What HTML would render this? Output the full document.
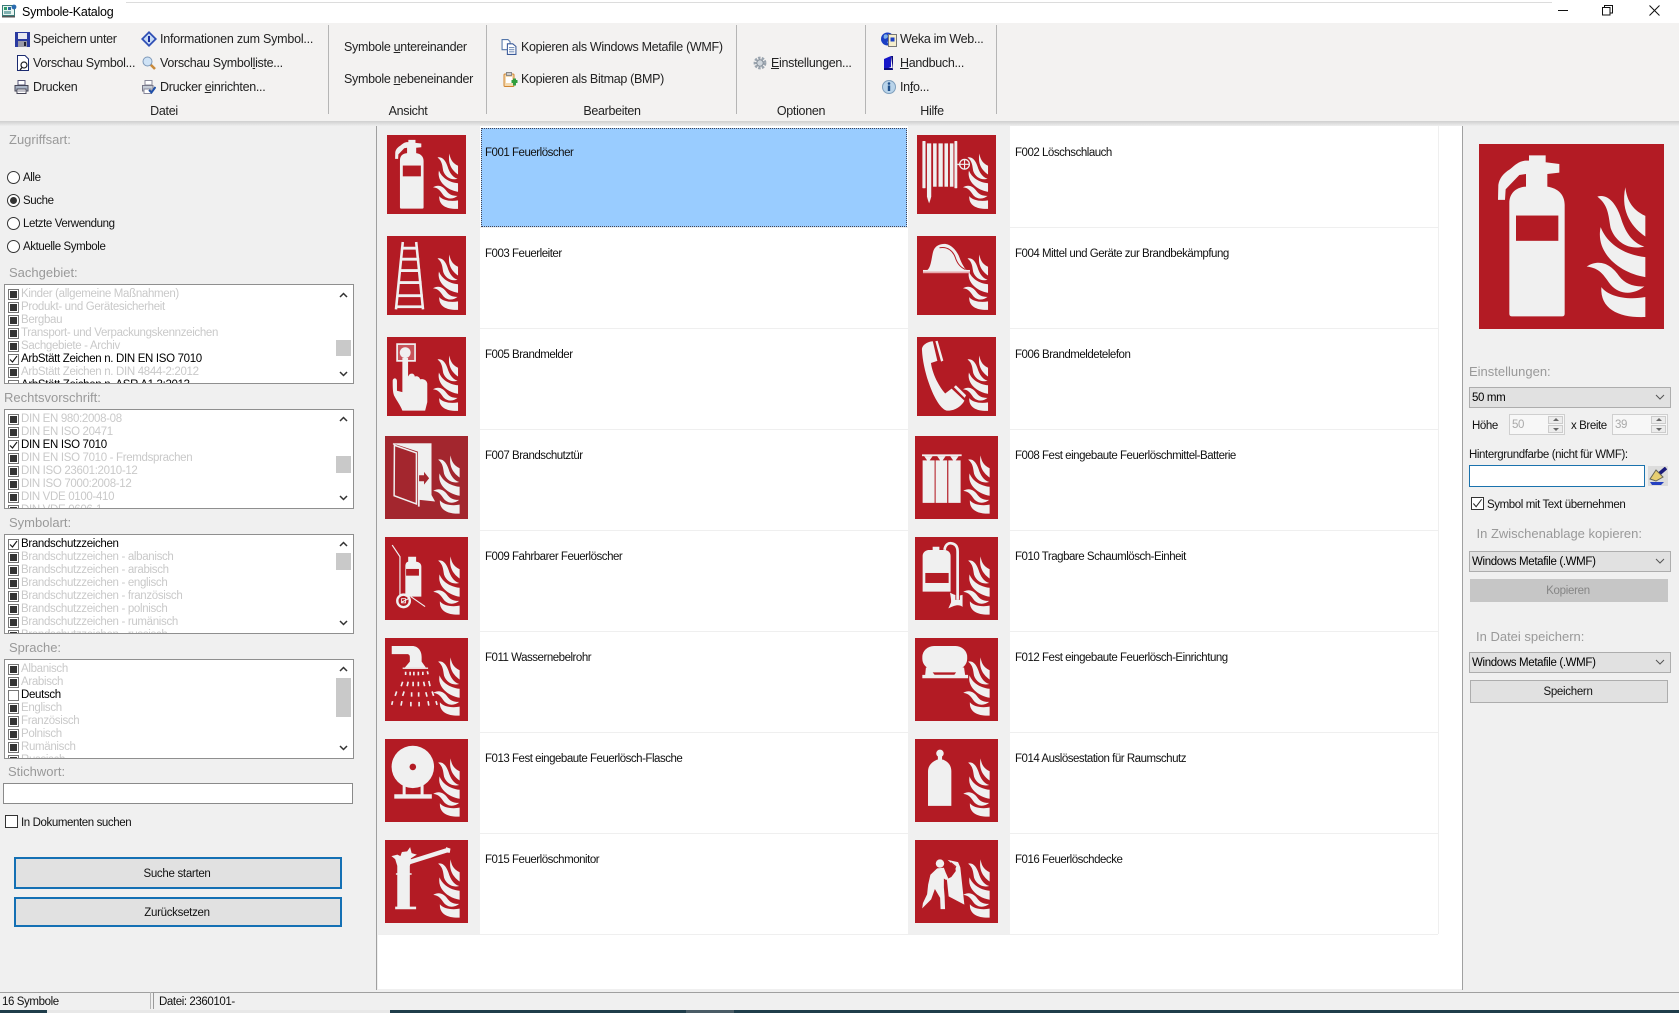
<!DOCTYPE html>
<html lang="de"><head><meta charset="utf-8"><title>Symbole-Katalog</title>
<style>
html,body{margin:0;padding:0;width:1679px;height:1013px;overflow:hidden;background:#f0f0f0;font-family:"Liberation Sans",Arial,sans-serif;color:#000}
.a{position:absolute}
.t{position:absolute;white-space:nowrap;line-height:16px;height:16px}
.r{font-size:12.5px;letter-spacing:-.31px;color:#222}
.rc{transform:translateX(-50%)}
.l{font-size:13px;color:#999;letter-spacing:0;margin-top:1px}
.n{font-size:11.5px;letter-spacing:-.4px;color:#111;margin-top:1px}
.g{font-size:11.5px;letter-spacing:-.48px;color:#111;margin-top:1px}
.sep{position:absolute;top:25px;height:89px;width:1px;background:#b5b5b5}
.i{position:absolute;display:block}
.hl{position:absolute;left:480px;width:428px;height:1px;background:#efefef}
.hr{position:absolute;left:1010px;width:428px;height:1px;background:#efefef}
.rad{position:absolute;left:7px;width:11px;height:11px;border:1px solid #333;border-radius:50%;background:#fff}
.box{position:absolute;left:4px;width:348px;height:98px;border:1px solid #8f8f8f;background:#fff;overflow:hidden}
.box .row{position:relative;height:13px;line-height:13px;font-size:11.5px;letter-spacing:-.33px;color:#c9c9c9;padding-left:16px;white-space:nowrap}
.box .row.on{color:#000}
.box .row:first-child{margin-top:2.5px}
.box .row i{position:absolute;left:3px;top:1px;width:9px;height:9px;border:1px solid #777;background:#fff}
.box .row.x i:after{content:"";position:absolute;left:1px;top:1px;width:7px;height:7px;background:#333}
.sb{position:absolute;left:331px;top:1px;width:15px;height:96px;background:#fff}
.th{position:absolute;left:0;width:15px;background:#c9c9c9}
.ar{position:absolute;left:3px;width:9px;height:6px}
.sel{position:absolute;left:1469px;width:198px;height:20px;border:1px solid #adadad;background:#e1e1e1;font-size:11.5px;letter-spacing:-.35px;line-height:21px;padding-left:2px;box-sizing:content-box}
.btn{position:absolute;border:2px solid #1470b4;background:#e1e1e1;text-align:center;font-size:11.5px;letter-spacing:-.3px;color:#111;box-sizing:border-box;padding-right:2px}
.sp{position:absolute;width:15px;height:8px;background:#ececec;border:1px solid #ccc;box-sizing:border-box}
.tu,.td{position:absolute;width:0;height:0;border-left:3px solid transparent;border-right:3px solid transparent}
.tu{border-bottom:3px solid #666}.td{border-top:3px solid #666}
</style></head><body>
<svg width="0" height="0" style="position:absolute"><defs>
<g id="fl"><path d="M496 172C500 205 512 238 556 258V320C520 295 480 250 496 172Z"/><path d="M412 200C445 190 470 225 482 262C495 305 515 338 553 350C510 362 468 340 452 295C445 255 445 225 412 200Z"/><path d="M422 292C440 340 490 375 556 382V442C480 430 405 370 422 292Z"/><path d="M380 410C420 385 455 405 478 440C495 462 520 472 553 470C520 497 478 495 452 465C430 435 420 415 380 410Z"/><path d="M424 472C445 500 500 512 556 502V562C480 565 420 540 424 472Z"/></g>
</defs></svg>

<!-- title bar -->
<div class="a" style="left:0;top:0;width:1679px;height:23px;background:#fff"></div>
<div class="a" style="left:126px;top:2px;width:1426px;height:1px;background:#dcdcdc"></div>
<svg class="i" style="left:2px;top:4px" width="15" height="14" viewBox="0 0 15 14"><rect x="0.5" y="1.5" width="12" height="10" fill="#e8f4f0" stroke="#3a7a78"/><rect x="2" y="3" width="3" height="3" fill="#2d9a6a"/><rect x="6" y="3" width="3" height="3" fill="#2d6a9a"/><rect x="2" y="7" width="7" height="3" fill="#7fb0b0"/><circle cx="12" cy="3" r="2.4" fill="#2b6cb0"/><rect x="0" y="12" width="13" height="1.5" fill="#555"/></svg>
<div class="t" style="left:22px;top:4px;font-size:12.5px;letter-spacing:-.25px">Symbole-Katalog</div>
<div class="a" style="left:1558px;top:10px;width:10px;height:1px;background:#111"></div>
<svg class="i" style="left:1602px;top:5px" width="11" height="11" viewBox="0 0 11 11" fill="none" stroke="#111"><rect x=".5" y="2.5" width="7.5" height="7.5"/><path d="M2.5 2.5V.5H10.5V8H8"/></svg>
<svg class="i" style="left:1649px;top:5px" width="11" height="11" viewBox="0 0 11 11" stroke="#111"><path d="M.5.5L10.5 10.5M10.5.5L.5 10.5"/></svg>

<!-- ribbon -->
<div class="a" style="left:0;top:23px;width:1679px;height:98px;background:#f3f2f1"></div>
<div class="a" style="left:0;top:121px;width:1679px;height:5px;background:linear-gradient(#cfcfcf,#eeeeee)"></div>
<div class="sep" style="left:328px"></div><div class="sep" style="left:486px"></div><div class="sep" style="left:736px"></div><div class="sep" style="left:865px"></div><div class="sep" style="left:996px"></div>

<svg class="i" style="left:15px;top:32px" width="15" height="15" viewBox="0 0 15 15"><rect width="15" height="15" fill="#2a3aa0"/><rect x="3" y="1" width="9" height="6" fill="#e8e8f0"/><rect x="3" y="9" width="9" height="6" fill="#9a9aa8"/><rect x="9" y="10" width="2" height="4" fill="#223"/></svg>
<div class="t r" style="left:33px;top:31px">Speichern unter</div>
<svg class="i" style="left:16px;top:55px" width="14" height="16" viewBox="0 0 14 16"><path d="M1.5.5H9L12.5 4V15.5H1.5Z" fill="#fff" stroke="#1a2a70"/><circle cx="8" cy="10" r="3" fill="none" stroke="#222" stroke-width="1.2"/><path d="M6 12.5L4 15" stroke="#222" stroke-width="1.4"/></svg>
<div class="t r" style="left:33px;top:55px">Vorschau Symbol...</div>
<svg class="i" style="left:14px;top:80px" width="15" height="14" viewBox="0 0 15 14"><path d="M4 .5H11V5H4Z" fill="#fff" stroke="#557"/><path d="M1 5.5H14V11H1Z" fill="#a9b4c6" stroke="#445"/><path d="M3 9H12V13.5H3Z" fill="#fff" stroke="#445"/><path d="M4 11H11" stroke="#889"/></svg>
<div class="t r" style="left:33px;top:79px">Drucken</div>
<svg class="i" style="left:141px;top:31px" width="16" height="16" viewBox="0 0 16 16"><path d="M8 0L16 8L8 16L0 8Z" fill="#2f4fb5"/><path d="M8 2.5L13.5 8L8 13.5L2.5 8Z" fill="#c8dcf5"/><rect x="7" y="5" width="2" height="6" fill="#1a2fa0"/></svg>
<div class="t r" style="left:160px;top:31px;letter-spacing:-.22px">Informationen zum Symbol...</div>
<svg class="i" style="left:142px;top:56px" width="14" height="14" viewBox="0 0 14 14"><path d="M8 8L13 13" stroke="#c98a3a" stroke-width="2.6"/><circle cx="5.5" cy="5.5" r="4.5" fill="#cfe3f6" stroke="#7d98b8"/></svg>
<div class="t r" style="left:160px;top:55px">Vorschau Symbol<u>l</u>iste...</div>
<svg class="i" style="left:142px;top:80px" width="14" height="14" viewBox="0 0 14 14"><path d="M3 .5H10V5H3Z" fill="#fff" stroke="#889"/><path d="M.5 5.5H11V11H.5Z" fill="#c5ccd6" stroke="#778"/><path d="M2 9H9V13.5H2Z" fill="#fff" stroke="#889"/><path d="M7 10L9.5 12.5L13.5 7" fill="none" stroke="#1f4fa8" stroke-width="2"/></svg>
<div class="t r" style="left:160px;top:79px">Drucker <u>e</u>inrichten...</div>
<div class="t r rc" style="left:164px;top:103px">Datei</div>

<div class="t r" style="left:344px;top:39px">Symbole <u>u</u>ntereinander</div>
<div class="t r" style="left:344px;top:71px">Symbole <u>n</u>ebeneinander</div>
<div class="t r rc" style="left:408px;top:103px">Ansicht</div>

<svg class="i" style="left:501px;top:39px" width="16" height="16" viewBox="0 0 14 15"><path d="M.5.5H6L8 2.5V10H.5Z" fill="#fff" stroke="#5577aa"/><path d="M5.5 4.5H10.5L13.5 7V14.5H5.5Z" fill="#fff" stroke="#3a5a99"/><path d="M7 8H12M7 10H12M7 12H12" stroke="#7a94bc"/></svg>
<div class="t r" style="left:521px;top:39px">Kopieren als Windows Metafile (WMF)</div>
<svg class="i" style="left:503px;top:72px" width="15" height="15" viewBox="0 0 14 15"><rect x=".5" y="2" width="10" height="12.5" rx="1" fill="#f4d9ae" stroke="#d08530"/><rect x="3" y=".5" width="5" height="3" fill="#ccc" stroke="#888"/><rect x="2.5" y="5" width="6" height="6" fill="#fff"/><path d="M8 8H14V11H8ZM9.5 6.5H12.5V13.500H9.500Z" fill="#2f9e3d"/></svg>
<div class="t r" style="left:521px;top:71px">Kopieren als Bitmap (BMP)</div>
<div class="t r rc" style="left:612px;top:103px">Bearbeiten</div>

<svg class="i" style="left:753px;top:55px" width="14" height="16" viewBox="0 0 14 16"><circle cx="7" cy="8" r="4.6" fill="none" stroke="#9aa4ae" stroke-width="3.6" stroke-dasharray="2.2 1.1"/><circle cx="7" cy="8" r="3.200" fill="#cfd6dc" stroke="#8a949e"/></svg>
<div class="t r" style="left:771px;top:55px"><u>E</u>instellungen...</div>
<div class="t r rc" style="left:801px;top:103px">Optionen</div>

<svg class="i" style="left:881px;top:31px" width="16" height="16" viewBox="0 0 16 16"><circle cx="6.500" cy="8" r="6.500" fill="#1b3fc4"/><path d="M3 4C6 2 8 5 6 7C3 9 2 7 3 4ZM6 11C8 9 10 11 8 14Z" fill="#7fb1e8"/><path d="M7.500 3.500H15.500V15.500H7.500Z" fill="#f5eecd" stroke="#777"/><rect x="9.500" y="6.500" width="4" height="4" fill="#1b3fc4"/></svg>
<div class="t r" style="left:900px;top:31px">Weka im Web...</div>
<svg class="i" style="left:884px;top:56px" width="9" height="14" viewBox="0 0 9 14"><path d="M0 3L7 0V11L0 14Z" fill="#1616c8"/><path d="M7 0H9V12H0L0 14H9" fill="#0a0a7a"/></svg>
<div class="t r" style="left:900px;top:55px"><u>H</u>andbuch...</div>
<svg class="i" style="left:882px;top:80px" width="14" height="14" viewBox="0 0 14 14"><circle cx="7" cy="7" r="6.500" fill="#b9d4ea" stroke="#7f9fbc"/><circle cx="7" cy="3.500" r="1.300" fill="#1f4f8a"/><rect x="5.800" y="5.500" width="2.400" height="5.500" fill="#1f4f8a"/></svg>
<div class="t r" style="left:900px;top:79px">In<u>f</u>o...</div>
<div class="t r rc" style="left:932px;top:103px">Hilfe</div>

<!-- left panel -->
<div class="a" style="left:376px;top:126px;width:1px;height:864px;background:#a0a0a0"></div>
<div class="t l" style="left:9px;top:131px">Zugriffsart:</div>
<div class="rad" style="top:170.5px"></div><div class="t n" style="left:23px;top:169px">Alle</div>
<div class="rad" style="top:193.5px"></div><div class="a" style="left:10px;top:196.5px;width:7px;height:7px;border-radius:50%;background:#333"></div><div class="t n" style="left:23px;top:192px">Suche</div>
<div class="rad" style="top:216.5px"></div><div class="t n" style="left:23px;top:215px">Letzte Verwendung</div>
<div class="rad" style="top:239.5px"></div><div class="t n" style="left:23px;top:238px">Aktuelle Symbole</div>

<div class="t l" style="left:9px;top:264px">Sachgebiet:</div>
<div class="box" style="top:284px">
<div class="row x"><i></i>Kinder (allgemeine Maßnahmen)</div>
<div class="row x"><i></i>Produkt- und Gerätesicherheit</div>
<div class="row x"><i></i>Bergbau</div>
<div class="row x"><i></i>Transport- und Verpackungskennzeichen</div>
<div class="row x"><i></i>Sachgebiete - Archiv</div>
<div class="row on"><i><svg width="9" height="9" viewBox="0 0 9 9" style="position:absolute;left:0;top:0"><path d="M1 4.500L3.500 7L8 1" fill="none" stroke="#111" stroke-width="1.100"/></svg></i>ArbStätt Zeichen n. DIN EN ISO 7010</div>
<div class="row x"><i></i>ArbStätt Zeichen n. DIN 4844-2:2012</div>
<div class="row on"><i></i>ArbStätt Zeichen n. ASR A1.3:2013</div>
<div class="sb"><div class="th" style="top:54px;height:16px"></div><svg class="ar" style="top:6px" viewBox="0 0 9 6"><path d="M1 5L4.500 1.500L8 5" fill="none" stroke="#333" stroke-width="1.500"/></svg><svg class="ar" style="top:85px" viewBox="0 0 9 6"><path d="M1 1L4.500 4.500L8 1" fill="none" stroke="#333" stroke-width="1.500"/></svg></div>
</div>

<div class="t l" style="left:4px;top:389px">Rechtsvorschrift:</div>
<div class="box" style="top:409px">
<div class="row x"><i></i>DIN EN 980:2008-08</div>
<div class="row x"><i></i>DIN EN ISO 20471</div>
<div class="row on"><i><svg width="9" height="9" viewBox="0 0 9 9" style="position:absolute;left:0;top:0"><path d="M1 4.500L3.500 7L8 1" fill="none" stroke="#111" stroke-width="1.100"/></svg></i>DIN EN ISO 7010</div>
<div class="row x"><i></i>DIN EN ISO 7010 - Fremdsprachen</div>
<div class="row x"><i></i>DIN ISO 23601:2010-12</div>
<div class="row x"><i></i>DIN ISO 7000:2008-12</div>
<div class="row x"><i></i>DIN VDE 0100-410</div>
<div class="row x"><i></i>DIN VDE 0606-1</div>
<div class="sb"><div class="th" style="top:45px;height:17px"></div><svg class="ar" style="top:5px" viewBox="0 0 9 6"><path d="M1 5L4.500 1.500L8 5" fill="none" stroke="#333" stroke-width="1.500"/></svg><svg class="ar" style="top:84px" viewBox="0 0 9 6"><path d="M1 1L4.500 4.500L8 1" fill="none" stroke="#333" stroke-width="1.500"/></svg></div>
</div>

<div class="t l" style="left:9px;top:514px">Symbolart:</div>
<div class="box" style="top:534px">
<div class="row on"><i><svg width="9" height="9" viewBox="0 0 9 9" style="position:absolute;left:0;top:0"><path d="M1 4.500L3.500 7L8 1" fill="none" stroke="#111" stroke-width="1.100"/></svg></i>Brandschutzzeichen</div>
<div class="row x"><i></i>Brandschutzzeichen - albanisch</div>
<div class="row x"><i></i>Brandschutzzeichen - arabisch</div>
<div class="row x"><i></i>Brandschutzzeichen - englisch</div>
<div class="row x"><i></i>Brandschutzzeichen - französisch</div>
<div class="row x"><i></i>Brandschutzzeichen - polnisch</div>
<div class="row x"><i></i>Brandschutzzeichen - rumänisch</div>
<div class="row x"><i></i>Brandschutzzeichen - russisch</div>
<div class="sb"><div class="th" style="top:17px;height:17px"></div><svg class="ar" style="top:5px" viewBox="0 0 9 6"><path d="M1 5L4.500 1.500L8 5" fill="none" stroke="#333" stroke-width="1.500"/></svg><svg class="ar" style="top:84px" viewBox="0 0 9 6"><path d="M1 1L4.500 4.500L8 1" fill="none" stroke="#333" stroke-width="1.500"/></svg></div>
</div>

<div class="t l" style="left:9px;top:639px">Sprache:</div>
<div class="box" style="top:659px">
<div class="row x"><i></i>Albanisch</div>
<div class="row x"><i></i>Arabisch</div>
<div class="row on"><i></i>Deutsch</div>
<div class="row x"><i></i>Englisch</div>
<div class="row x"><i></i>Französisch</div>
<div class="row x"><i></i>Polnisch</div>
<div class="row x"><i></i>Rumänisch</div>
<div class="row x"><i></i>Russisch</div>
<div class="sb"><div class="th" style="top:17px;height:39px"></div><svg class="ar" style="top:5px" viewBox="0 0 9 6"><path d="M1 5L4.500 1.500L8 5" fill="none" stroke="#333" stroke-width="1.500"/></svg><svg class="ar" style="top:84px" viewBox="0 0 9 6"><path d="M1 1L4.500 4.500L8 1" fill="none" stroke="#333" stroke-width="1.500"/></svg></div>
</div>

<div class="t l" style="left:8px;top:763px">Stichwort:</div>
<div class="a" style="left:3px;top:783px;width:348px;height:19px;border:1px solid #8a8a8a;background:#fff"></div>
<div class="a" style="left:5px;top:815px;width:11px;height:11px;border:1px solid #333;background:#fff"></div>
<div class="t n" style="left:21px;top:814px">In Dokumenten suchen</div>
<div class="btn" style="left:14px;top:857px;width:328px;height:32px;line-height:30px">Suche starten</div>
<div class="btn" style="left:14px;top:897px;width:328px;height:30px;line-height:28px">Zurücksetzen</div>

<!-- main list -->
<div class="a" style="left:378px;top:126px;width:1084px;height:863px;background:#fff"></div>
<div class="a" style="left:378px;top:126px;width:102px;height:808px;background:#f0f0f0"></div>
<div class="a" style="left:908px;top:126px;width:102px;height:808px;background:#f0f0f0"></div>
<div class="a" style="left:1438px;top:126px;width:1px;height:808px;background:#efefef"></div>
<div class="hl" style="top:227px"></div><div class="hr" style="top:227px"></div>
<div class="hl" style="top:328px"></div><div class="hr" style="top:328px"></div>
<div class="hl" style="top:429px"></div><div class="hr" style="top:429px"></div>
<div class="hl" style="top:530px"></div><div class="hr" style="top:530px"></div>
<div class="hl" style="top:631px"></div><div class="hr" style="top:631px"></div>
<div class="hl" style="top:732px"></div><div class="hr" style="top:732px"></div>
<div class="hl" style="top:833px"></div><div class="hr" style="top:833px"></div>
<div class="a" style="left:378px;top:934px;width:1060px;height:1px;background:#efefef"></div>
<div class="a" style="left:481px;top:128px;width:424px;height:97px;background:#99ccff;border:1px dotted #445"></div>

<div class="t g" style="left:485px;top:144px">F001 Feuerlöscher</div>
<div class="t g" style="left:1015px;top:144px">F002 Löschschlauch</div>
<div class="t g" style="left:485px;top:245px">F003 Feuerleiter</div>
<div class="t g" style="left:1015px;top:245px">F004 Mittel und Geräte zur Brandbekämpfung</div>
<div class="t g" style="left:485px;top:346px">F005 Brandmelder</div>
<div class="t g" style="left:1015px;top:346px">F006 Brandmeldetelefon</div>
<div class="t g" style="left:485px;top:447px">F007 Brandschutztür</div>
<div class="t g" style="left:1015px;top:447px">F008 Fest eingebaute Feuerlöschmittel-Batterie</div>
<div class="t g" style="left:485px;top:548px">F009 Fahrbarer Feuerlöscher</div>
<div class="t g" style="left:1015px;top:548px">F010 Tragbare Schaumlösch-Einheit</div>
<div class="t g" style="left:485px;top:649px">F011 Wassernebelrohr</div>
<div class="t g" style="left:1015px;top:649px">F012 Fest eingebaute Feuerlösch-Einrichtung</div>
<div class="t g" style="left:485px;top:750px">F013 Fest eingebaute Feuerlösch-Flasche</div>
<div class="t g" style="left:1015px;top:750px">F014 Auslösestation für Raumschutz</div>
<div class="t g" style="left:485px;top:851px">F015 Feuerlöschmonitor</div>
<div class="t g" style="left:1015px;top:851px">F016 Feuerlöschdecke</div>

<!-- F001 -->
<svg class="i" style="left:387px;top:135px" width="79" height="79" viewBox="57 42 555 556" preserveAspectRatio="none"><rect x="57" y="42" width="555" height="556" fill="#b31b24"/><g fill="#f0f0f0"><use href="#fl"/><path d="M207 76H257V97L298 102V128L262 132V170C295 175 314 195 314 225V552Q314 560 306 560H156Q148 560 148 552V220C148 190 168 172 198 170V132L178 135L137 178L135 210H114L115 165C118 145 130 130 150 118C165 105 175 95 195 92H207Z"/></g><rect x="168" y="257" width="127" height="76" fill="#b31b24"/></svg>
<!-- F002 -->
<svg class="i" style="left:917px;top:135px" width="79" height="79" viewBox="57 42 555 556" preserveAspectRatio="none"><rect x="57" y="42" width="555" height="556" fill="#b31b24"/><g fill="#f0f0f0"><use href="#fl"/><rect x="95" y="84" width="22" height="333" rx="4"/><path d="M127 101H157V476L150 500L142 523L134 500L127 476Z"/><rect x="170" y="101" width="25" height="305"/><rect x="208" y="101" width="30" height="305"/><rect x="250" y="101" width="25" height="305"/><rect x="288" y="101" width="25" height="305"/><rect x="320" y="84" width="20" height="333" rx="4"/><rect x="340" y="244" width="20" height="10"/></g><circle cx="391" cy="248" r="34" fill="#b31b24" stroke="#f0f0f0" stroke-width="9"/><path d="M391 214V282M357 248H425" stroke="#f0f0f0" stroke-width="8"/></svg>
<!-- F003 -->
<svg class="i" style="left:387px;top:236px" width="79" height="79" viewBox="57 42 555 556" preserveAspectRatio="none"><rect x="57" y="42" width="555" height="556" fill="#b31b24"/><g fill="#f0f0f0"><use href="#fl"/></g><path d="M168 84L120 558M262 84L310 558" stroke="#f0f0f0" stroke-width="18" fill="none"/><path d="M155 128H275M150 205H283M142 285H290M132 370H300M125 462H308M120 540H312" stroke="#f0f0f0" stroke-width="20" fill="none"/></svg>
<!-- F004 -->
<svg class="i" style="left:917px;top:236px" width="79" height="79" viewBox="57 42 555 556" preserveAspectRatio="none"><rect x="57" y="42" width="555" height="556" fill="#b31b24"/><g fill="#f0f0f0"><use href="#fl"/><path d="M130 281C160 260 160 170 175 140C190 105 230 95 260 98C300 105 330 140 350 180C365 220 385 265 405 281Z"/><rect x="99" y="281" width="330" height="11"/></g><rect x="99" y="292" width="330" height="12" fill="#e7a9ac"/><path d="M215 125C275 115 310 150 325 190C340 240 365 265 398 278" fill="none" stroke="#b31b24" stroke-width="7"/></svg>
<!-- F005 -->
<svg class="i" style="left:387px;top:337px" width="79" height="79" viewBox="57 42 555 556" preserveAspectRatio="none"><rect x="57" y="42" width="555" height="556" fill="#b31b24"/><g fill="#f0f0f0"><use href="#fl"/></g><rect x="128" y="92" width="126" height="118" fill="#c9535a" stroke="#f0f0f0" stroke-width="12"/><g fill="#f0f0f0"><circle cx="185" cy="152" r="38"/><path d="M165 320V190H205V320L215 305C230 295 250 300 252 320C265 315 285 320 290 340C305 335 335 340 340 370V500L325 560H165C150 520 125 490 110 460C100 440 97 420 97 350C97 330 125 325 127 350V420L165 430Z"/></g></svg>
<!-- F006 -->
<svg class="i" style="left:917px;top:337px" width="79" height="79" viewBox="57 42 555 556" preserveAspectRatio="none"><rect x="57" y="42" width="555" height="556" fill="#b31b24"/><g fill="#f0f0f0"><use href="#fl"/><path d="M92 135C88 100 130 75 168 72L200 210L155 225C165 300 210 390 255 440L300 405L390 490C370 530 320 565 265 560C190 540 100 300 92 135Z"/><path d="M186 72L202 68L242 208L226 215Z"/><path d="M316 395L330 382L402 452L392 470Z"/></g></svg>
<!-- F007 -->
<svg class="i" style="left:385px;top:436px" width="83" height="83" viewBox="57 42 555 556" preserveAspectRatio="none"><rect x="57" y="42" width="555" height="556" fill="#a3262e"/><g fill="#f0f0f0"><use href="#fl"/><path d="M110 91H368V437L392 481L289 470V515H277V147Z"/></g><path d="M120 104L267 155V497L118 442Z" fill="#a3262e" stroke="#f0f0f0" stroke-width="10"/><path d="M110 91H368V100H110Z" fill="#f0f0f0"/><path d="M285 305H318V282L352 325L318 368V345H285Z" fill="#a3262e"/></svg>
<!-- F008 -->
<svg class="i" style="left:915px;top:436px" width="83" height="83" viewBox="57 42 555 556" preserveAspectRatio="none"><rect x="57" y="42" width="555" height="556" fill="#b31b24"/><g fill="#f0f0f0"><use href="#fl"/><rect x="104" y="165" width="265" height="12"/><path d="M118 177H175L155 205H188V490H108V205H138Z"/><path d="M205 177H262L242 205H272V490H195V205H225Z"/><path d="M292 177H349L329 205H362V490H280V205H312Z"/></g></svg>
<!-- F009 -->
<svg class="i" style="left:385px;top:537px" width="83" height="83" viewBox="57 42 555 556" preserveAspectRatio="none"><rect x="57" y="42" width="555" height="556" fill="#b31b24"/><g fill="#f0f0f0"><use href="#fl"/><path d="M212 174H265V207C285 210 300 220 300 240V441H193V240C193 220 200 210 212 207Z"/></g><rect x="198" y="256" width="86" height="45" fill="#b31b24"/><path d="M105 96L157 174V430M229 441L325 508M215 455L165 480" stroke="#f0f0f0" stroke-width="8" fill="none"/><circle cx="181" cy="470" r="42" fill="none" stroke="#f0f0f0" stroke-width="16"/><rect x="168" y="455" width="26" height="28" fill="none" stroke="#f0f0f0" stroke-width="6"/></svg>
<!-- F010 -->
<svg class="i" style="left:915px;top:537px" width="83" height="83" viewBox="57 42 555 556" preserveAspectRatio="none"><rect x="57" y="42" width="555" height="556" fill="#b31b24"/><g fill="#f0f0f0"><use href="#fl"/><path d="M175 107H220V129H260C285 135 295 150 295 170V408H108V170C108 150 120 135 145 129H175Z"/><path d="M291 415C320 430 340 440 375 430V510C350 490 320 500 280 520L298 480C300 465 295 440 291 415Z"/></g><rect x="126" y="283" width="156" height="67" fill="#b31b24"/><path d="M255 128C258 95 280 80 300 84C330 88 342 110 342 140V463" fill="none" stroke="#b31b24" stroke-width="30"/><path d="M255 128C258 95 280 80 300 84C330 88 342 110 342 140V463" fill="none" stroke="#f0f0f0" stroke-width="18"/></svg>
<!-- F011 -->
<svg class="i" style="left:385px;top:638px" width="83" height="83" viewBox="57 42 555 556" preserveAspectRatio="none"><rect x="57" y="42" width="555" height="556" fill="#b31b24"/><g fill="#f0f0f0"><use href="#fl"/><path d="M102 96H240C275 96 302 125 302 170V200L330 240H190L223 200V170C223 158 218 150 205 150H102Z"/><rect x="175" y="240" width="170" height="9"/></g><path d="M195 268V290M225 268V292M250 268V292M280 268V292M310 268V290M340 265L345 285M175 335L165 365M212 335L205 365M245 335V365M280 335V365M315 335L322 365M350 330L358 365M135 400L125 430M185 400L175 430M235 405V435M282 405V435M330 405L338 435M372 400L382 430M108 465L102 490M170 465L164 495M230 470V500M285 470V500M345 465L350 495M398 465L405 490" stroke="#f0f0f0" stroke-width="11" fill="none"/></svg>
<!-- F012 -->
<svg class="i" style="left:915px;top:638px" width="83" height="83" viewBox="57 42 555 556" preserveAspectRatio="none"><rect x="57" y="42" width="555" height="556" fill="#b31b24"/><g fill="#f0f0f0"><use href="#fl"/><rect x="106" y="96" width="300" height="158" rx="78" ry="72"/><path d="M130 240H385L392 289H412V312H106V289H125Z"/></g><path d="M175 272L188 288H320L332 272Z" fill="#b31b24"/></svg>
<!-- F013 -->
<svg class="i" style="left:385px;top:739px" width="83" height="83" viewBox="57 42 555 556" preserveAspectRatio="none"><rect x="57" y="42" width="555" height="556" fill="#b31b24"/><g fill="#f0f0f0"><use href="#fl"/><circle cx="243" cy="229" r="142"/><path d="M175 345H195V412H295V345H315V412H370V441H119V412H175Z"/></g><circle cx="243" cy="229" r="22" fill="#b31b24"/></svg>
<!-- F014 -->
<svg class="i" style="left:915px;top:739px" width="83" height="83" viewBox="57 42 555 556" preserveAspectRatio="none"><rect x="57" y="42" width="555" height="556" fill="#b31b24"/><g fill="#f0f0f0"><use href="#fl"/><circle cx="224" cy="138" r="25"/><rect x="210" y="150" width="28" height="40"/><path d="M205 180H245C280 195 300 220 300 260V490H144V260C144 220 170 195 205 180Z"/></g></svg>
<!-- F015 -->
<svg class="i" style="left:385px;top:840px" width="83" height="83" viewBox="57 42 555 556" preserveAspectRatio="none"><rect x="57" y="42" width="555" height="556" fill="#b31b24"/><g fill="#f0f0f0"><use href="#fl"/><path d="M205 118L225 90L235 130L270 140L230 165V190L223 215V265H235V275H223V488H265V506H125V488H139V275H130V265H139V215L125 170L100 150L140 140L160 150L170 122Z"/></g><path d="M220 190L480 108" stroke="#f0f0f0" stroke-width="30"/><path d="M465 90L495 100L490 128L465 125Z" fill="#f0f0f0"/></svg>
<!-- F016 -->
<svg class="i" style="left:915px;top:840px" width="83" height="83" viewBox="57 42 555 556" preserveAspectRatio="none"><rect x="57" y="42" width="555" height="556" fill="#b31b24"/><g fill="#f0f0f0"><use href="#fl"/><circle cx="224" cy="200" r="28"/><path d="M275 175L345 190L360 225L387 475L282 420L270 305L300 290L330 250L325 220Z"/><path d="M205 232L250 228L262 260L280 300L265 310L250 300V360L255 420L258 505H228L225 430L190 370L165 440L105 500L110 465L138 405L145 340L160 275Z"/></g><path d="M275 215L300 195L330 220L310 270L280 275Z" fill="none" stroke="#b31b24" stroke-width="6"/></svg>

<!-- right panel -->
<div class="a" style="left:1462px;top:126px;width:1px;height:864px;background:#a0a0a0"></div>
<svg class="i" style="left:1479px;top:144px" width="185" height="185" viewBox="57 42 555 556" preserveAspectRatio="none"><rect x="57" y="42" width="555" height="556" fill="#b31b24"/><g fill="#f0f0f0"><use href="#fl"/><path d="M207 76H257V97L298 102V128L262 132V170C295 175 314 195 314 225V552Q314 560 306 560H156Q148 560 148 552V220C148 190 168 172 198 170V132L178 135L137 178L135 210H114L115 165C118 145 130 130 150 118C165 105 175 95 195 92H207Z"/></g><rect x="168" y="257" width="127" height="76" fill="#b31b24"/></svg>

<div class="t l" style="left:1469px;top:363px">Einstellungen:</div>
<div class="sel" style="top:387px;height:19px">50 mm</div>
<svg class="i" style="left:1655px;top:394px" width="10" height="6" viewBox="0 0 10 6"><path d="M1 1L5 5L9 1" fill="none" stroke="#555"/></svg>
<div class="t n" style="left:1472px;top:417px">Höhe</div>
<div class="a" style="left:1509px;top:414px;width:54px;height:19px;border:1px solid #cfcfcf;background:#f7f7f7"></div>
<div class="t n" style="left:1512px;top:416px;color:#aaa">50</div>
<div class="sp" style="left:1548px;top:416px"></div><div class="sp" style="left:1548px;top:425px"></div>
<div class="tu" style="left:1553px;top:418px"></div><div class="td" style="left:1553px;top:428px"></div>
<div class="t n" style="left:1571px;top:417px">x Breite</div>
<div class="a" style="left:1612px;top:414px;width:54px;height:19px;border:1px solid #cfcfcf;background:#f7f7f7"></div>
<div class="t n" style="left:1615px;top:416px;color:#aaa">39</div>
<div class="sp" style="left:1651px;top:416px"></div><div class="sp" style="left:1651px;top:425px"></div>
<div class="tu" style="left:1656px;top:418px"></div><div class="td" style="left:1656px;top:428px"></div>
<div class="t n" style="left:1469px;top:446px">Hintergrundfarbe (nicht für WMF):</div>
<div class="a" style="left:1469px;top:465px;width:174px;height:20px;border:1px solid #1a72ad;background:#fff"></div>
<div class="a" style="left:1648px;top:466px;width:20px;height:20px;background:#dcdcdc"></div>
<svg class="i" style="left:1649px;top:467px" width="18" height="18" viewBox="0 0 18 18"><path d="M17 1L10 7" stroke="#1a1a7a" stroke-width="3.500"/><path d="M7 3L14 10L7 14L1 12Z" fill="#e7cf72" stroke="#665"/><path d="M1 15H15L12 18H3Z" fill="#2540c0"/></svg>
<div class="a" style="left:1471px;top:497px;width:11px;height:11px;border:1px solid #333;background:#fff"></div>
<svg class="i" style="left:1472px;top:498px" width="11" height="11" viewBox="0 0 12 12"><path d="M1.500 6L4.500 9.500L10.500 1.500" fill="none" stroke="#222" stroke-width="1.100"/></svg>
<div class="t n" style="left:1487px;top:496px">Symbol mit Text übernehmen</div>
<div class="t l" style="left:1476.5px;top:525px">In Zwischenablage kopieren:</div>
<div class="sel" style="top:551px;height:19px">Windows Metafile (.WMF)</div>
<svg class="i" style="left:1655px;top:558px" width="10" height="6" viewBox="0 0 10 6"><path d="M1 1L5 5L9 1" fill="none" stroke="#555"/></svg>
<div class="a" style="left:1470px;top:579px;width:198px;height:23px;background:#c6c6c6;text-align:center;font-size:11.5px;line-height:25px;letter-spacing:-.3px;color:#858585"><span style="position:relative;left:-1px">Kopieren</span></div>
<div class="t l" style="left:1476px;top:628px">In Datei speichern:</div>
<div class="sel" style="top:652px;height:19px">Windows Metafile (.WMF)</div>
<svg class="i" style="left:1655px;top:659px" width="10" height="6" viewBox="0 0 10 6"><path d="M1 1L5 5L9 1" fill="none" stroke="#555"/></svg>
<div class="a" style="left:1470px;top:680px;width:196px;height:21px;border:1px solid #adadad;background:#e1e1e1;text-align:center;font-size:11.5px;line-height:23px;letter-spacing:-.3px;color:#111"><span style="position:relative;left:-1px">Speichern</span></div>

<!-- status bar -->
<div class="a" style="left:0;top:992px;width:1679px;height:1px;background:#a0a0a0"></div>
<div class="a" style="left:150px;top:992px;width:1px;height:17px;background:#b5b5b5"></div>
<div class="a" style="left:153px;top:992px;width:1px;height:17px;background:#9a9a9a"></div>
<div class="t g" style="left:2px;top:993px;letter-spacing:-.4px">16 Symbole</div>
<div class="t g" style="left:159px;top:993px;letter-spacing:-.4px">Datei: 2360101-</div>
<div class="a" style="left:0;top:1010px;width:1679px;height:3px;background:#1f3d4a"></div>
<div class="a" style="left:47px;top:1010px;width:343px;height:3px;background:#e8e8e8"></div>
<div class="a" style="left:686px;top:1010px;width:48px;height:3px;background:#4a5c66"></div>
</body></html>
